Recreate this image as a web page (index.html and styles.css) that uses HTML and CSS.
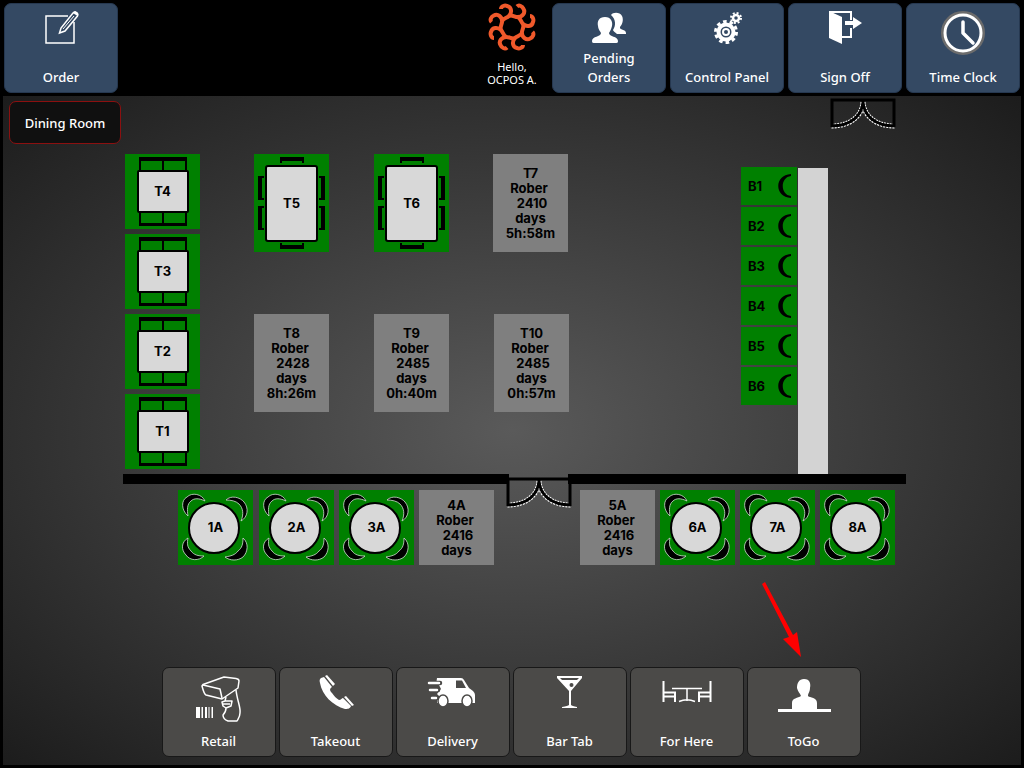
FILE: index.html
```html
<!DOCTYPE html>
<html lang="en">
<head>
  <meta charset="UTF-8" />
  <meta name="viewport" content="width=device-width, initial-scale=1.0"/>
  <title>Dining Room</title>
  <link rel="stylesheet" href="styles.css">
</head>
<body>
  <!-- shared shapes for the floor plan -->
  <svg class="shapes" aria-hidden="true">
    <symbol id="square-table" viewBox="0 0 75 75">
      <path d="M14 3H62V18H14ZM16 7V17H37V7ZM39 7V17H60V7Z" fill-rule="evenodd"/>
      <path d="M14 57H62V72H14ZM16 58V69H37V58ZM39 58V69H60V58Z" fill-rule="evenodd"/>
      <rect x="13" y="17" width="50" height="41" rx="1" fill="#d8d8d8" stroke="#000" stroke-width="2"/>
    </symbol>
    <symbol id="long-table" viewBox="0 0 75 98">
      <path d="M26 3H50V9H48V7H28V9H26Z"/>
      <path d="M26 95H50V89H48V91H28V89H26Z"/>
      <path d="M4 22H10V24H8V44H10V46H4ZM4 52H10V54H8V74H10V76H4Z"/>
      <path d="M71 22H65V24H67V44H65V46H71ZM71 52H65V54H67V74H65V76H71Z"/>
      <rect x="12" y="12" width="51" height="75" rx="2" fill="#d8d8d8" stroke="#000" stroke-width="2"/>
    </symbol>
    <symbol id="round-table" viewBox="0 0 75 75">
      <g stroke="#cfe0cf" stroke-width="0.8">
        <path d="M10 26C3 20 3 10 9 7C14 2 24 4 27 11C21 8 16 8 13 11C9 14 9 20 10 26Z"/>
        <path d="M48 10C53 5 62 7 66 12C71 18 70 27 63 31C66 24 65 18 61 14C58 11 53 10 48 10Z"/>
        <path d="M10 48C3 52 3 60 8 65C12 71 21 71 26 66C20 66 16 65 13 61C9 57 9 53 10 48Z"/>
        <path d="M65 48C71 53 70 62 65 67C60 71 52 71 47 67C53 66 57 65 60 61C64 58 65 54 65 48Z"/>
      </g>
      <circle cx="36" cy="38" r="25" fill="#d8d8d8" stroke="#000" stroke-width="2"/>
    </symbol>
    <symbol id="stool" viewBox="0 0 14 24">
      <path d="M13 0C-4 1 -4 23 13 24V22C2 21 2 3 13 2Z"/>
    </symbol>
    <symbol id="door" viewBox="0 0 66 32">
      <g fill="none">
        <path d="M33 4C32 17 22 28 1 28M33 4C34 17 44 28 65 28" stroke="#fff" stroke-width="5" stroke-dasharray="2 1"/>
        <path d="M33 2V4C32 17 22 28 1 28M33 4C34 17 44 28 65 28" stroke="#000" stroke-width="3"/>
        <path d="M2 29V2H64V29" stroke="#000" stroke-width="3"/>
      </g>
    </symbol>
  </svg>

  <header>
    <button class="tile blue">
      <svg class="icon" viewBox="0 0 54 34" fill="none" stroke="#fff">
        <path d="M34 5H12V32H40V11" stroke-width="1.5"/>
        <path d="M25.500 22L27 17L39 2C41 0 45 2 43.500 5L31 20Z" stroke-width="1.500"/>
        <path d="M29 18L40 5" stroke-width="1"/>
        <path d="M39 2L43.500 5L44 2L41 0Z" fill="#fff" stroke="none"/>
      </svg>
      <span>Order</span>
    </button>

    <div class="user">
      <svg viewBox="0 0 48 48" fill="none" stroke="#f0592b" stroke-width="4">
        <path id="arm" d="M13 6C13 3 17 2 19 3C24 4 24 10 21 13C19 15 16 15 14 18"/>
        <use href="#arm" transform="rotate(45 24 24)"/>
        <use href="#arm" transform="rotate(90 24 24)"/>
        <use href="#arm" transform="rotate(135 24 24)"/>
        <use href="#arm" transform="rotate(180 24 24)"/>
        <use href="#arm" transform="rotate(225 24 24)"/>
        <use href="#arm" transform="rotate(270 24 24)"/>
        <use href="#arm" transform="rotate(315 24 24)"/>
      </svg>
      <p>Hello,<br>OCPOS A.</p>
    </div>

    <button class="tile blue">
      <svg class="icon" viewBox="0 0 54 34" fill="#fff">
        <path d="M29 4C31 1 38 1 40 5C42 9 40 14 38 16C37 19 44 18 44 22V23H35C33 21 31 20 31 19C34 15 34 8 29 4Z"/>
        <path d="M23 6C29 6 31 11 30 15C29 19 28 20 27 22C27 26 36 25 36 30C36 32 35 32 33 32H13C11 32 10 32 10 30C10 25 19 26 19 22C18 20 16 18 16 15C15 10 17 6 23 6Z"/>
      </svg>
      <span>Pending<br>Orders</span>
    </button>
    <button class="tile blue">
      <svg class="icon" viewBox="0 0 54 34" fill="none" stroke="#fff">
        <circle cx="26" cy="21" r="7.500" stroke-width="4"/>
        <circle cx="26" cy="21" r="10.500" stroke-width="3" stroke-dasharray="3.600 3"/>
        <circle cx="26" cy="21" r="3" stroke-width="2"/>
        <circle cx="36" cy="7" r="3" stroke-width="2.500"/>
        <circle cx="36" cy="7" r="5" stroke-width="2" stroke-dasharray="2 1.930"/>
      </svg>
      <span>Control Panel</span>
    </button>
    <button class="tile blue">
      <svg class="icon" viewBox="0 0 54 34" fill="#fff">
        <path d="M11 0L24 6V33L11 27Z"/>
        <path d="M11 1H33V9M33 17V26H24" fill="none" stroke="#fff" stroke-width="2"/>
        <path d="M27 10H35V6L44 12L35 18V14H27Z"/>
      </svg>
      <span>Sign Off</span>
    </button>
    <button class="tile blue">
      <svg class="icon clock" viewBox="0 0 54 44" fill="none">
        <circle cx="27" cy="22" r="20.500" stroke="#6c6c6c" stroke-width="3"/>
        <circle cx="27" cy="22" r="18" stroke="#fff" stroke-width="3"/>
        <path d="M27 11V22L37 32" stroke="#fff" stroke-width="3.500" stroke-linecap="round" stroke-linejoin="round"/>
      </svg>
      <span>Time Clock</span>
    </button>
  </header>

  <main>
    <div class="room">
      <div class="plan">
        <svg class="door door-top"><use href="#door"/></svg>
        <div class="wall wall-left"></div>
        <div class="wall wall-right"></div>
        <svg class="door door-main"><use href="#door"/></svg>
        <div class="counter"></div>

        <button class="table t4"><svg><use href="#square-table"/></svg><span>T4</span></button>
        <button class="table t3"><svg><use href="#square-table"/></svg><span>T3</span></button>
        <button class="table t2"><svg><use href="#square-table"/></svg><span>T2</span></button>
        <button class="table t1"><svg><use href="#square-table"/></svg><span>T1</span></button>

        <button class="table long t5"><svg><use href="#long-table"/></svg><span>T5</span></button>
        <button class="table long t6"><svg><use href="#long-table"/></svg><span>T6</span></button>
        <button class="table long busy t7"><span>T7<br>Rober&nbsp;<br>&nbsp;2410<br>days<br>5h:58m</span></button>
        <button class="table long busy t8"><span>T8<br>Rober&nbsp;<br>&nbsp;2428<br>days<br>8h:26m</span></button>
        <button class="table long busy t9"><span>T9<br>Rober&nbsp;<br>&nbsp;2485<br>days<br>0h:40m</span></button>
        <button class="table long busy t10"><span>T10<br>Rober&nbsp;<br>&nbsp;2485<br>days<br>0h:57m</span></button>

        <div class="bar">
          <button class="seat"><span>B1</span><svg><use href="#stool"/></svg></button>
          <button class="seat"><span>B2</span><svg><use href="#stool"/></svg></button>
          <button class="seat"><span>B3</span><svg><use href="#stool"/></svg></button>
          <button class="seat"><span>B4</span><svg><use href="#stool"/></svg></button>
          <button class="seat"><span>B5</span><svg><use href="#stool"/></svg></button>
          <button class="seat"><span>B6</span><svg><use href="#stool"/></svg></button>
        </div>

        <button class="table a1"><svg><use href="#round-table"/></svg><span>1A</span></button>
        <button class="table a2"><svg><use href="#round-table"/></svg><span>2A</span></button>
        <button class="table a3"><svg><use href="#round-table"/></svg><span>3A</span></button>
        <button class="table busy a4"><span>4A<br>Rober&nbsp;<br>&nbsp;2416<br>days</span></button>
        <button class="table busy a5"><span>5A<br>Rober&nbsp;<br>&nbsp;2416<br>days</span></button>
        <button class="table a6"><svg><use href="#round-table"/></svg><span>6A</span></button>
        <button class="table a7"><svg><use href="#round-table"/></svg><span>7A</span></button>
        <button class="table a8"><svg><use href="#round-table"/></svg><span>8A</span></button>

        <svg class="arrow" viewBox="0 0 40 76">
          <path d="M0 2L3 0L31 53L35 50L39 75L21 57L27 55Z" fill="#f00"/>
        </svg>
      </div>
      <button class="room-tab">Dining Room</button>
    </div>

    <nav>
      <button class="tile gray">
        <svg class="icon" viewBox="0 0 54 48" fill="none" stroke="#fff" stroke-width="1.500" stroke-linejoin="round">
          <path d="M4 32H8V43H4ZM9.500 32H11V43H9.500ZM13 32H15V43H13ZM16.500 32H17.500V43H16.500ZM19.500 32H21V43H19.500Z" fill="#fff" stroke="none"/>
          <path d="M11 9.500L32 2L44 3.500Q47 4 47 6L46 13L30 24L14 20Q12 19 10 11Z"/>
          <path d="M11 10L28 14L30 23"/>
          <path d="M44 15C45 25 49 33 48 38C48 42 46 44 45 46H36C33 45 31 44 31 40C33 38 34 37 34 33L31 31L30 27L33 26H40L39 31L34 33M31 29L38 29M33 26L34 22"/>
        </svg>
        <span>Retail</span>
      </button>
      <button class="tile gray">
        <svg class="icon" viewBox="0 0 54 48" fill="#fff">
          <path d="M12 3L15 2L23 12C20 14 21 16 23 18C25 21 27 23 30 25C32 25 33 23 34 23L42 31C41 34 38 34 36 34C24 31 13 20 11 8C10 5 11 4 12 3Z"/>
          <path d="M16 1L18 0L26 9L24 11ZM35 22L37 21L45 30L43 31Z"/>
        </svg>
        <span>Takeout</span>
      </button>
      <button class="tile gray">
        <svg class="icon" viewBox="0 0 54 48" fill="#fff">
          <path d="M11 3H35Q37 3 38 5L43 13L47 16Q49 18 49 20V28H11V25L14 22L11 19L15 14L13 10H10Z"/>
          <path d="M30 5.500H36L40 13H30Z" fill="#4b4a48"/>
          <path d="M2 8H14M4 15H12M6 23H12" stroke="#4b4a48" stroke-width="4.500" stroke-linecap="round"/>
          <path d="M3 8H13M4 15H11M6 23H10" stroke="#fff" stroke-width="2.500" stroke-linecap="round"/>
          <g stroke="#4b4a48" stroke-width="1.500">
            <ellipse cx="17" cy="26" rx="5" ry="6"/>
            <ellipse cx="41" cy="26" rx="5" ry="6"/>
          </g>
        </svg>
        <span>Delivery</span>
      </button>
      <button class="tile gray">
        <svg class="icon" viewBox="0 0 54 48" fill="#fff">
          <path d="M14 1H39V3L28 16V30Q29 31 34 32V33H19V32Q25 31 26 30V16L14 3ZM17 3L19 5H34L36 3Z" fill-rule="evenodd"/>
          <circle cx="28.500" cy="10" r="2" fill="#4b4a48"/>
        </svg>
        <span>Bar Tab</span>
      </button>
      <button class="tile gray">
        <svg class="icon" viewBox="0 0 54 48" fill="none" stroke="#fff" stroke-width="1.500">
          <path d="M3.500 6V27M3.500 17.500H15V27M3.500 21.500H15" stroke-width="2"/>
          <path d="M50.500 6V27M50.500 17.500H39V27M50.500 21.500H39" stroke-width="2"/>
          <path d="M12 13.500H42M27 14V26M19 26.500Q27 23 35 26.500"/>
        </svg>
        <span>For Here</span>
      </button>
      <button class="tile gray">
        <svg class="icon" viewBox="0 0 54 48" fill="#fff">
          <path d="M27 4C33 4 34 9 33 13C33 17 31 18 31 21C33 23 40 22 40 28V34H54V37H1V34H15V28C15 23 21 23 24 21C23 18 21 17 20 13C20 8 22 4 27 4Z"/>
        </svg>
        <span>ToGo</span>
      </button>
    </nav>
  </main>
</body>
</html>
```
FILE: styles.css
```css
* {
  box-sizing: border-box;
}

body {
  font-family: "Noto Sans", "Open Sans", sans-serif;
  background: #000;
  color: #fff;
  margin: 0;
  min-height: 100vh;
  display: flex;
  flex-direction: column;
}

button {
  font-family: inherit;
  color: inherit;
  border: none;
  margin: 0;
  padding: 0;
  cursor: pointer;
}

.shapes {
  position: absolute;
  width: 0;
  height: 0;
}

header {
  display: flex;
  gap: 4px;
  padding: 3px 4px;
}

.tile {
  width: 114px;
  height: 90px;
  flex-shrink: 0;
  display: flex;
  flex-direction: column;
  align-items: center;
  justify-content: space-between;
  padding: 7px 4px 5px;
  border-radius: 7px;
  font-size: 13px;
  font-weight: 500;
  line-height: 19px;
}

.blue {
  background: #344963;
  border: 1px solid #263850;
}

.gray {
  background: #4b4a48;
  border: 1px solid #181818;
}

.icon {
  width: 54px;
  height: 34px;
  flex-shrink: 0;
}

.icon.clock {
  height: 44px;
}

nav .icon {
  height: 48px;
}

.user {
  margin-left: auto;
  width: 72px;
  text-align: center;
}

.user svg {
  display: block;
  width: 48px;
  height: 48px;
  margin: 0 auto;
}

.user p {
  margin: 9px 0 0;
  font-size: 11px;
  line-height: 13px;
}

main {
  flex: 1;
  display: flex;
  flex-direction: column;
  margin: 0 3px 3px;
  padding-bottom: 8px;
  background: radial-gradient(ellipse at center, #5a5a5a, #1c1c1c);
}

.room {
  flex: 1;
  display: grid;
}

.room > * {
  grid-area: 1 / 1;
}

.room-tab {
  width: 112px;
  height: 43px;
  margin: 5px 6px;
  align-self: start;
  z-index: 1;
  background: #101010;
  border: 1px solid #8b1010;
  border-radius: 7px;
  font-size: 13px;
  font-weight: 500;
}

nav {
  display: flex;
  justify-content: center;
  gap: 3px;
  padding-right: 2px;
}

/* floor plan */
.plan {
  position: relative;
  min-height: 570px;
  font-family: Inter, "Liberation Sans", sans-serif;
  color: #000;
}

.table,
.seat {
  background: #008000;
  font-size: 13px;
  font-weight: 700;
  line-height: 15px;
}

.table {
  position: absolute;
  width: 75px;
  height: 75px;
  display: grid;
  place-items: center;
}

.table > * {
  grid-area: 1 / 1;
}

.table svg {
  width: 75px;
  height: 75px;
}

.long,
.table.long svg {
  height: 98px;
}

.busy {
  background: #7f7f7f;
}

.t4 { left: 122px; top: 58px; }
.t3 { left: 122px; top: 138px; }
.t2 { left: 122px; top: 218px; }
.t1 { left: 122px; top: 298px; }
.t5 { left: 251px; top: 58px; }
.t6 { left: 371px; top: 58px; }
.t7 { left: 490px; top: 58px; }
.t8 { left: 251px; top: 218px; }
.t9 { left: 371px; top: 218px; }
.t10 { left: 491px; top: 218px; }
.a1 { left: 175px; top: 394px; }
.a2 { left: 256px; top: 394px; }
.a3 { left: 336px; top: 394px; }
.a4 { left: 416px; top: 394px; }
.a5 { left: 577px; top: 394px; }
.a6 { left: 657px; top: 394px; }
.a7 { left: 737px; top: 394px; }
.a8 { left: 817px; top: 394px; }

.bar {
  position: absolute;
  left: 738px;
  top: 71px;
  width: 56px;
  display: flex;
  flex-direction: column;
  gap: 2px;
}

.seat {
  height: 38px;
  display: flex;
  align-items: center;
  justify-content: space-between;
  padding: 0 5px 0 7px;
}

.seat svg {
  width: 14px;
  height: 24px;
}

.counter {
  position: absolute;
  left: 795px;
  top: 72px;
  width: 30px;
  height: 306px;
  background: #d3d3d3;
}

.wall {
  position: absolute;
  top: 378px;
  height: 10px;
  background: #000;
}

.wall-left {
  left: 120px;
  width: 386px;
}

.wall-right {
  left: 565px;
  width: 338px;
}

.door {
  position: absolute;
  width: 66px;
  height: 32px;
}

.door-top {
  left: 827px;
  top: 2px;
}

.door-main {
  left: 503px;
  top: 381px;
}

.arrow {
  position: absolute;
  left: 759px;
  top: 486px;
  width: 40px;
  height: 76px;
}
```
